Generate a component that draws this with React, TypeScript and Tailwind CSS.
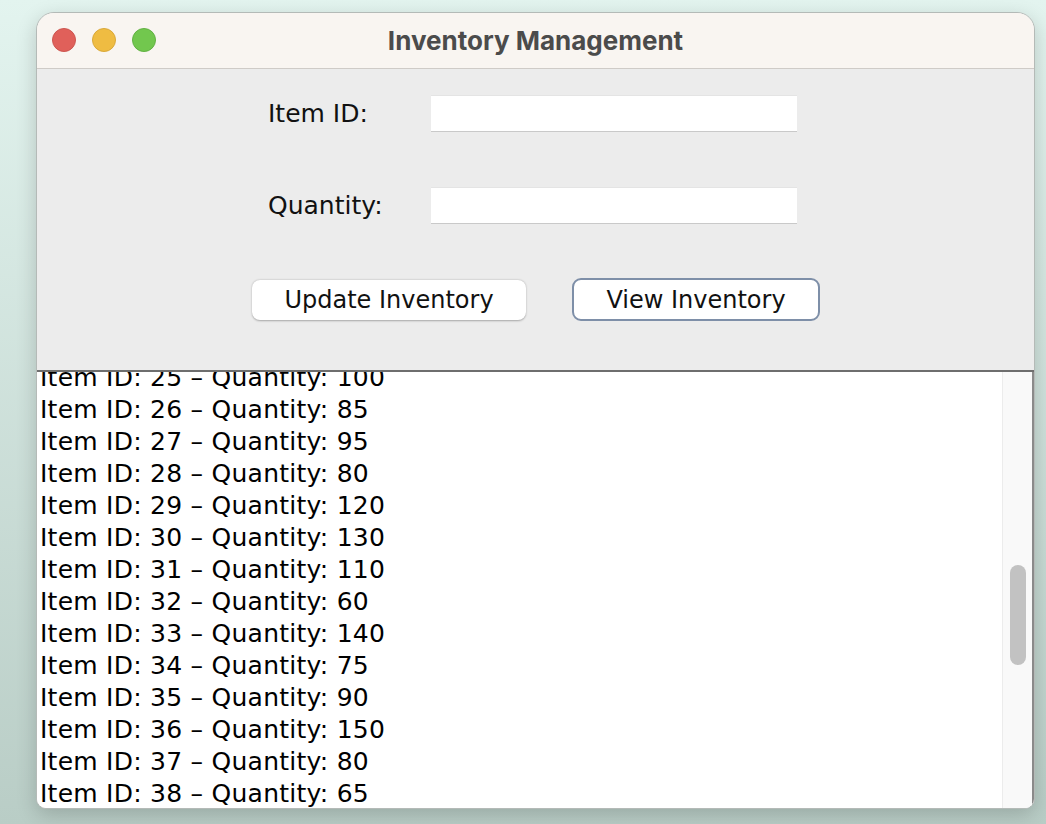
import React from 'react';

const rows: [number, number][] = [
    [25, 100], [26, 85], [27, 95], [28, 80], [29, 120], [30, 130], [31, 110],
    [32, 60], [33, 140], [34, 75], [35, 90], [36, 150], [37, 80], [38, 65],
];

const bodyFont = { fontFamily: '"DejaVu Sans", "Liberation Sans", sans-serif' };

export default function App() {
    return (
        <div className="w-[1046px] h-[824px] bg-gradient-to-b from-[#e3f4ef] to-[#b9cdc6] pt-[12px] pl-[36px] overflow-hidden">
            {/* Window */}
            <div className="w-[999px] h-[797px] flex flex-col rounded-t-[18px] rounded-b-[10px] border border-[#b4bab7] bg-[#ececec] overflow-hidden shadow-[0_6px_20px_rgba(0,0,0,0.18)]">

                {/* Title bar */}
                <div className="relative h-[56px] shrink-0 bg-[#f9f5f1] border-b border-[#cfcbc7] flex items-center justify-center">
                    <div className="absolute left-[15px] top-[15px] flex gap-[16px]">
                        <span className="w-[24px] h-[24px] rounded-full bg-[#e0605a] border border-[#cc5650]" />
                        <span className="w-[24px] h-[24px] rounded-full bg-[#efbc42] border border-[#d9a83a]" />
                        <span className="w-[24px] h-[24px] rounded-full bg-[#72c74e] border border-[#62b144]" />
                    </div>
                    <h1 className="text-[26px] font-bold text-[#4b4b4b] font-['Inter',sans-serif]">
                        Inventory Management
                    </h1>
                </div>

                {/* Form */}
                <div className="h-[301px] shrink-0 bg-[#ececec] pt-[26px]" style={bodyFont}>
                    <div className="flex items-center pl-[231px] h-[37px]">
                        <label className="w-[163px] text-[25px] text-[#111]">Item ID:</label>
                        <div className="w-[366px] h-[37px] bg-white border-t border-[#e4e4e4] border-b border-b-[#c9c9c9]" />
                    </div>
                    <div className="flex items-center pl-[231px] h-[37px] mt-[55px]">
                        <label className="w-[163px] text-[25px] text-[#111]">Quantity:</label>
                        <div className="w-[366px] h-[37px] bg-white border-t border-[#e4e4e4] border-b border-b-[#c9c9c9]" />
                    </div>
                    <div className="flex items-center pl-[215px] mt-[54px] gap-[46px]">
                        <button className="w-[274px] h-[40px] bg-white rounded-[8px] text-[24px] text-[#111] shadow-[0_0.5px_2px_rgba(0,0,0,0.3)]">
                            Update Inventory
                        </button>
                        <button className="w-[248px] h-[43px] bg-white rounded-[9px] text-[24px] text-[#111] border-[2.5px] border-[#7e8fa8]">
                            View Inventory
                        </button>
                    </div>
                </div>

                {/* Text area */}
                <div className="flex-1 flex bg-white border-t-2 border-[#6e6e6e] overflow-hidden" style={bodyFont}>
                    <div className="flex-1 overflow-hidden pl-[3px]">
                        <div className="-mt-[10px]">
                            {rows.map(([id, qty]) => (
                                <div key={id} className="h-[32px] leading-[32px] text-[25px] tracking-[0.25px] text-black whitespace-nowrap">
                                    Item ID: {id} – Quantity: {qty}
                                </div>
                            ))}
                        </div>
                    </div>
                    {/* Scrollbar */}
                    <div className="w-[30px] shrink-0 bg-[#f9f9f9] border-l border-[#ececec] pt-[193px] pl-[7px]">
                        <div className="w-[16px] h-[100px] rounded-full bg-[#c2c2c2]" />
                    </div>
                    <div className="w-[2px] shrink-0 bg-[#8a8a8a]" />
                </div>
            </div>
        </div>
    );
}
